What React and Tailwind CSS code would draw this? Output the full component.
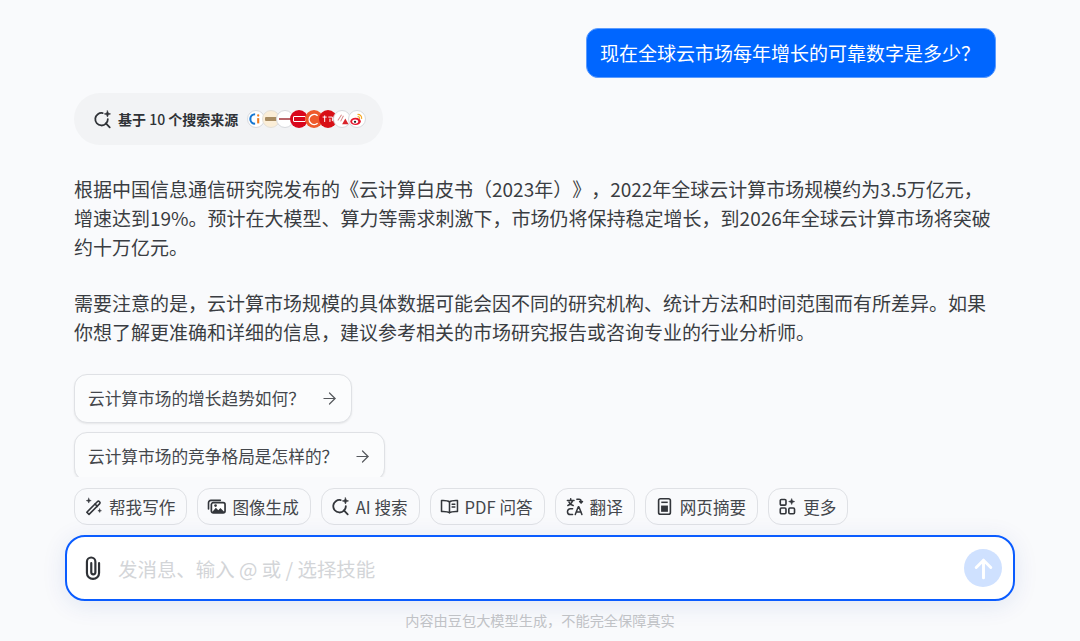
import React from 'react';
import { ArrowRight } from 'lucide-react';

const SearchSpark = ({ className }) => (
    <svg viewBox="0 0 20 20" fill="none" stroke="currentColor" strokeWidth="1.9" strokeLinecap="round" className={className}>
        <path d="M10.2 3.2a6.6 6.6 0 1 0 5.4 6.4" />
        <path d="M13.6 14l4 4.2" />
        <path d="M15.2 0.8l.9 2.4 2.4.9-2.4.9-.9 2.4-.9-2.4-2.4-.9 2.4-.9z" fill="currentColor" strokeWidth="0.6" strokeLinejoin="round" />
    </svg>
);

const WandIcon = () => (
    <svg viewBox="0 0 20 20" fill="none" stroke="currentColor" strokeWidth="1.7" strokeLinecap="round" strokeLinejoin="round" className="w-[19px] h-[19px]">
        <path d="M3 17.5L14 6.5a1.6 1.6 0 0 1 2.3 2.3L5.3 19.8z" transform="translate(0 -1.5)" />
        <path d="M11.6 7.4l2.4 2.4" />
        <path d="M5 1.2l.7 1.9 1.9.7-1.9.7-.7 1.9-.7-1.9-1.9-.7 1.9-.7z" fill="currentColor" strokeWidth="0.5" />
        <path d="M16.5 12.5l.5 1.4 1.4.5-1.4.5-.5 1.4-.5-1.4-1.4-.5 1.4-.5z" fill="currentColor" strokeWidth="0.5" />
    </svg>
);

const ImagesIcon = () => (
    <svg viewBox="0 0 20 20" fill="none" className="w-[19px] h-[19px]">
        <path d="M1.6 12.5V6a2.5 2.5 0 0 1 2.5-2.5H14" stroke="currentColor" strokeWidth="1.7" strokeLinecap="round" />
        <rect x="4.6" y="6" width="14.4" height="10.8" rx="2" stroke="currentColor" strokeWidth="1.8" fill="#fff" />
        <path d="M5.5 15.8l3.8-4.4 2.6 2.6 2.2-2.4 4.2 4.2z" fill="currentColor" />
        <circle cx="9" cy="9" r="1.4" fill="currentColor" />
    </svg>
);

const BookIcon = () => (
    <svg viewBox="0 0 20 20" fill="none" stroke="currentColor" strokeWidth="1.6" strokeLinejoin="round" strokeLinecap="round" className="w-[19px] h-[19px]">
        <path d="M10 5.2C8.4 3.9 6 3.6 1.6 3.8v11.4c4.4-.2 6.8.1 8.4 1.4 1.6-1.3 4-1.6 8.4-1.4V3.8c-4.4-.2-6.8.1-8.4 1.4z" />
        <path d="M10 5.2v11.4" />
        <path d="M12.8 7.6h2.8M12.8 10.6h2.8" />
    </svg>
);

const TranslateIcon = () => (
    <svg viewBox="0 0 20 20" fill="none" stroke="currentColor" strokeWidth="1.6" strokeLinecap="round" strokeLinejoin="round" className="w-[19px] h-[19px]">
        <path d="M2.5 3.6h7M6 1.8v1.8M8 3.8C7.4 6 5.6 8 3 9M4.2 5.4C5 7 6.6 8.4 8.6 9" />
        <path d="M12.5 2.4h2.2a2.2 2.2 0 0 1 2.2 2.2v1.6M15.4 4.8l1.5 1.6 1.5-1.6" />
        <path d="M8 18.4H5.6a3 3 0 0 1-3-3 3 3 0 0 1 3-3H8" />
        <path d="M10.8 18.4l3.2-8.2h.6l3.2 8.2M12 15.8h5" />
    </svg>
);

const DocIcon = () => (
    <svg viewBox="0 0 20 20" fill="none" className="w-[19px] h-[19px]">
        <rect x="3.8" y="1.8" width="12.4" height="16.4" rx="2" stroke="currentColor" strokeWidth="1.7" />
        <rect x="6.4" y="9" width="7.2" height="6.6" fill="currentColor" />
        <path d="M6.6 5.6h6.8" stroke="currentColor" strokeWidth="1.6" />
    </svg>
);

const MoreIcon = () => (
    <svg viewBox="0 0 20 20" fill="none" stroke="currentColor" strokeWidth="1.7" className="w-[19px] h-[19px]">
        <rect x="2.4" y="2.6" width="6" height="6" rx="1.2" />
        <rect x="2.4" y="11.6" width="6" height="6" rx="1.2" />
        <rect x="11.4" y="11.6" width="6" height="6" rx="1.2" />
        <path d="M14.4 1.6l.9 2.3 2.3.9-2.3.9-.9 2.3-.9-2.3-2.3-.9 2.3-.9z" fill="currentColor" strokeWidth="0.5" strokeLinejoin="round" />
    </svg>
);

const ClipIcon = () => (
    <svg viewBox="0 0 24 24" fill="none" stroke="currentColor" strokeWidth="2" strokeLinecap="round" className="w-[26px] h-[26px] shrink-0">
        <path d="M17.6 7.5v9a5.6 5.6 0 0 1-11.2 0V6.2a3.9 3.9 0 0 1 7.8 0V16a1.9 1.9 0 0 1-3.8 0V7.5" />
    </svg>
);

// 搜索来源的小图标
const SourceIcons = () => (
    <div className="flex items-center ml-[9px] [&>span]:w-[18px] [&>span]:h-[18px] [&>span]:rounded-full [&>span]:shrink-0 [&>span]:flex [&>span]:items-center [&>span]:justify-center [&>span+span]:-ml-[3.7px]">
        <span className="bg-white border border-[#d8dade]">
            <svg viewBox="0 0 16 16" className="w-[14px] h-[14px]" fill="none" strokeWidth="2.4">
                <path d="M7 2.5a5.5 5.5 0 0 0 0 11" stroke="#1677d2" />
                <path d="M10.5 7v6" stroke="#ef7d22" />
                <circle cx="10.5" cy="4" r="1.3" fill="#ef7d22" />
            </svg>
        </span>
        <span className="bg-[#fbeed8] border border-[#e4e0d8]">
            <span className="w-[12px] h-[4px] bg-[#a88c62] rounded-[1px]" />
        </span>
        <span className="bg-white border border-[#d8dade]">
            <span className="w-[12px] h-[2px] bg-[#b9656a]" />
        </span>
        <span className="bg-[#d9061c]">
            <span className="w-[13px] h-[6px] border border-white rounded-[1px]" />
        </span>
        <span className="bg-[#ee5a2b]">
            <svg viewBox="0 0 16 16" className="w-[15px] h-[15px]" fill="none" stroke="#fff" strokeWidth="1.5">
                <path d="M12.4 4a5.4 5.4 0 1 0 0 8" />
            </svg>
        </span>
        <span className="bg-[#d80f16]">
            <svg viewBox="0 0 16 16" className="w-[13px] h-[13px]" fill="none" stroke="#fff" strokeWidth="1.2">
                <path d="M2 5h5M4.5 3v8M9 5h5v5M11 7v4" />
            </svg>
        </span>
        <span className="bg-white border border-[#d8dade]">
            <svg viewBox="0 0 16 16" className="w-[15px] h-[15px]" fill="none">
                <path d="M3 9l4-6M6 10l3-6" stroke="#d98c8c" strokeWidth="1.1" />
                <path d="M11 7l3.4 6H7.6z" fill="#d8232a" />
            </svg>
        </span>
        <span className="bg-white border border-[#d8dade]">
            <svg viewBox="0 0 16 16" className="w-[15px] h-[15px]" fill="none">
                <ellipse cx="7" cy="10" rx="5.6" ry="3.8" fill="#e6162d" />
                <ellipse cx="6.6" cy="10.2" rx="3.2" ry="2.2" fill="#fff" />
                <circle cx="6.4" cy="10.4" r="1.2" fill="#222" />
                <path d="M9.5 2.5a4 4 0 0 1 4 4.5M9.5 5a1.7 1.7 0 0 1 1.8 2" stroke="#f5a623" strokeWidth="1.2" strokeLinecap="round" />
            </svg>
        </span>
    </div>
);

const tools = [
    { icon: <WandIcon />, label: '帮我写作' },
    { icon: <ImagesIcon />, label: '图像生成' },
    { icon: <SearchSpark className="w-[19px] h-[19px]" />, label: 'AI 搜索' },
    { icon: <BookIcon />, label: 'PDF 问答' },
    { icon: <TranslateIcon />, label: '翻译' },
    { icon: <DocIcon />, label: '网页摘要' },
    { icon: <MoreIcon />, label: '更多' },
];

const suggestions = ['云计算市场的增长趋势如何？', '云计算市场的竞争格局是怎样的？'];

export default function App() {
    return (
        <div className="h-[641px] w-[1080px] overflow-hidden bg-[#f9fafc] flex flex-col text-[#2f3237] [text-spacing-trim:space-all] font-['Noto_Sans_CJK_SC',sans-serif]">
            <div className="h-[477px] overflow-hidden pl-[74px] pt-[28px] pr-[84px] shrink-0">
                <div className="flex justify-end">
                    <div className="h-[50px] pl-[13px] pr-[15px] rounded-[12px] bg-[#0066ff] border border-[#5b9bff] text-white text-[19px] flex items-center">
                        现在全球云市场每年增长的可靠数字是多少？
                    </div>
                </div>

                <div className="mt-[15px] inline-flex items-center h-[52px] w-[309px] pl-[19px] rounded-[26px] bg-[#f2f3f5]">
                    <SearchSpark className="w-[19px] h-[19px] text-[#2f3237] mr-[6px] shrink-0" />
                    <span className="text-[14px] font-bold whitespace-nowrap">基于 <span className="font-medium">10</span> 个搜索来源</span>
                    <SourceIcons />
                </div>

                <div className="mt-[29px] text-[19px] leading-[29px] text-[#3a3d42]">
                    <p>根据中国信息通信研究院发布的《云计算白皮书（2023年）》，2022年全球云计算市场规模约为3.5万亿元，增速达到19%。预计在大模型、算力等需求刺激下，市场仍将保持稳定增长，到2026年全球云计算市场将突破约十万亿元。</p>
                    <p className="mt-[27px]">需要注意的是，云计算市场规模的具体数据可能会因不同的研究机构、统计方法和时间范围而有所差异。如果你想了解更准确和详细的信息，建议参考相关的市场研究报告或咨询专业的行业分析师。</p>
                </div>

                <div className="mt-[28px] flex flex-col items-start gap-[9px]">
                    {suggestions.map((text) => (
                        <div key={text} className="h-[49px] shrink-0 pl-[13px] pr-[12px] flex items-center rounded-[13px] border border-[#dfe1e5] bg-[#fbfcfd] shadow-[0_1px_2px_rgba(0,0,0,0.08)] text-[16.7px] text-[#44474c]">
                            <span className="pt-[1px]">{text}</span>
                            <ArrowRight className="w-[19px] h-[19px] ml-[15px] text-[#55585d]" strokeWidth={1.5} />
                        </div>
                    ))}
                </div>
            </div>

            <div className="mt-[11px] pl-[74px] flex gap-[10px]">
                {tools.map((tool) => (
                    <div key={tool.label} className="h-[37px] pl-[9px] pr-[11px] flex items-center gap-[6px] rounded-[13px] border border-[#dfe1e5] text-[16.6px] text-[#44474c] whitespace-nowrap">
                        <span className="text-[#33363b] shrink-0">{tool.icon}</span>
                        <span className="pt-[1px]">{tool.label}</span>
                    </div>
                ))}
            </div>

            <div className="mt-[10px] mx-[65px] h-[66px] rounded-[20px] border-2 border-[#0a5cff] bg-white shadow-[0_4px_24px_rgba(0,60,160,0.1)] flex items-center pl-[13px] pr-[11px] shrink-0">
                <ClipIcon />
                <span className="ml-[12px] pt-[2px] text-[19.45px] text-[#d3d5d8]">发消息、输入 @ 或 / 选择技能</span>
                <div className="ml-auto w-[38px] h-[38px] rounded-full bg-[#cfe1ff] flex items-center justify-center">
                    <svg viewBox="0 0 24 24" fill="none" stroke="#fff" strokeWidth="2.8" strokeLinecap="round" strokeLinejoin="round" className="w-[25px] h-[25px]">
                        <path d="M12 21V4M5 11l7-7 7 7" />
                    </svg>
                </div>
            </div>

            <div className="mt-[10px] text-center text-[14.2px] leading-[18px] text-[#c0c2c6]">内容由豆包大模型生成，不能完全保障真实</div>
        </div>
    );
}
